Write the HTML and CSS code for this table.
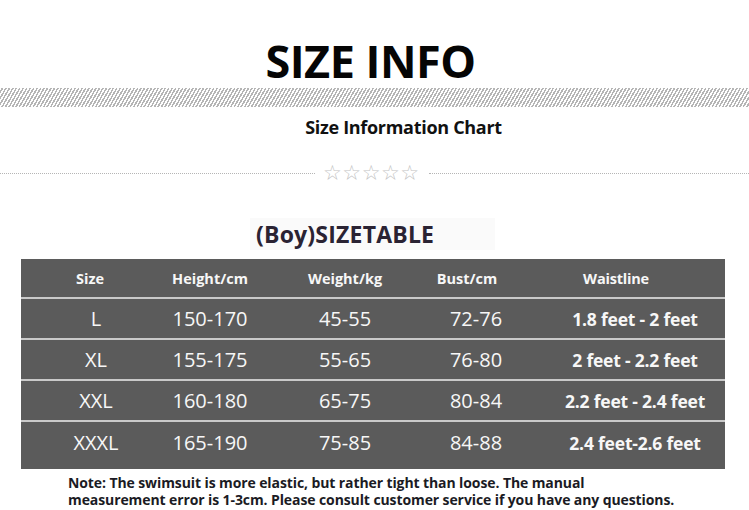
FILE: index.html
```
<!DOCTYPE html>
<html>
<head>
<meta charset="utf-8">
<link rel="stylesheet" href="styles.css">
</head>
<body>
<div class="page">
  <h1 class="title">SIZE INFO</h1>
  <div class="stripes"></div>
  <h2 class="subtitle">Size Information Chart</h2>
  <div class="divider">
    <span class="dots"></span>
    <span class="stars">☆☆☆☆☆</span>
    <span class="dots"></span>
  </div>
  <div class="tag-wrap"><div class="tag">(Boy)SIZETABLE</div></div>
  <div class="table">
    <div class="row head">
      <div class="c1">Size</div><div class="c2">Height/cm</div><div class="c3">Weight/kg</div><div class="c4">Bust/cm</div><div class="c5">Waistline</div>
    </div>
    <div class="row">
      <div class="c1">L</div><div class="c2">150-170</div><div class="c3">45-55</div><div class="c4">72-76</div><div class="c5">1.8 feet - 2 feet</div>
    </div>
    <div class="row">
      <div class="c1">XL</div><div class="c2">155-175</div><div class="c3">55-65</div><div class="c4">76-80</div><div class="c5">2 feet - 2.2 feet</div>
    </div>
    <div class="row">
      <div class="c1">XXL</div><div class="c2">160-180</div><div class="c3">65-75</div><div class="c4">80-84</div><div class="c5">2.2 feet - 2.4 feet</div>
    </div>
    <div class="row last">
      <div class="c1">XXXL</div><div class="c2">165-190</div><div class="c3">75-85</div><div class="c4">84-88</div><div class="c5">2.4 feet-2.6 feet</div>
    </div>
  </div>
  <p class="note">Note: The swimsuit is more elastic, but rather tight than loose. The manual<br>measurement error is 1-3cm. Please consult customer service if you have any questions.</p>
</div>
</body>
</html>
```
FILE: styles.css
```
* { box-sizing: border-box; }
html, body { margin: 0; padding: 0; background: #fff; }
body { font-family: "Open Sans", "DejaVu Sans", sans-serif; width: 749px; height: 510px; overflow: hidden; }
.page { display: flex; flex-direction: column; }
.title {
  margin: 38px 0 0 0;
  font-size: 45px;
  line-height: 45px;
  font-weight: 700;
  color: #050505;
  text-align: center;
  letter-spacing: -0.5px;
  padding-right: 8px;
}
.stripes {
  margin-top: 5px;
  height: 19px;
  background: repeating-linear-gradient(120deg, #ffffff 0 1.5px, #a8a8a8 1.5px 3px);
  opacity: 0.85;
}
.subtitle {
  margin: 8px 0 0 0;
  font-size: 18px;
  line-height: 24px;
  font-weight: 700;
  color: #111;
  text-align: center;
  padding-left: 58px;
  letter-spacing: -0.3px;
}
.divider {
  margin-top: 24px;
  height: 20px;
  display: flex;
  align-items: center;
}
.dots { flex: 1; border-top: 1px dotted #b5b5b5; }
.dots:first-child { flex: 0 0 315px; }
.stars {
  font-family: "DejaVu Sans", sans-serif;
  font-size: 21px;
  line-height: 20px;
  color: #c4c4c4;
  letter-spacing: 0.5px;
  padding: 0 9px 0 8px;
}
.tag-wrap { margin-top: 35px; display: flex; padding-left: 250px; }
.tag {
  width: 245px;
  height: 32px;
  background: #fafafa;
  font-size: 23px;
  font-weight: 700;
  line-height: 32px;
  color: #2a2333;
  padding-left: 6px;
  letter-spacing: 0.2px;
}
.table {
  margin: 9px 0 0 21px;
  width: 704px;
  display: grid;
  gap: 2px;
  background: #c9c9c9;
}
.row {
  display: grid;
  grid-template-columns: 144px 90px 180px 74px 216px;
  align-items: center;
  background: #5b5b5b;
  color: #f7f7f7;
  height: 39px;
  font-size: 20px;
  text-align: center;
}
.row > div { white-space: nowrap; }
.row .c1 { padding-left: 6px; }
.row .c4 { padding-left: 8px; }
.row .c5 { padding-left: 36px; font-size: 17.5px; font-weight: 700; letter-spacing: -0.2px; }
.row.head { height: 38px; font-size: 14.5px; font-weight: 700; }
.row.head .c1 { padding-left: 0; padding-right: 6px; }
.row.head .c4 { padding-left: 0; padding-right: 10px; }
.row.head .c5 { padding-left: 0; padding-right: 2px; font-size: 14.5px; }
.row.last { height: 47px; padding-bottom: 6px; }
.note {
  margin: 5px 0 0 68px;
  font-size: 14px;
  line-height: 17px;
  font-weight: 700;
  color: #1b1b24;
  letter-spacing: -0.1px;
}
```
